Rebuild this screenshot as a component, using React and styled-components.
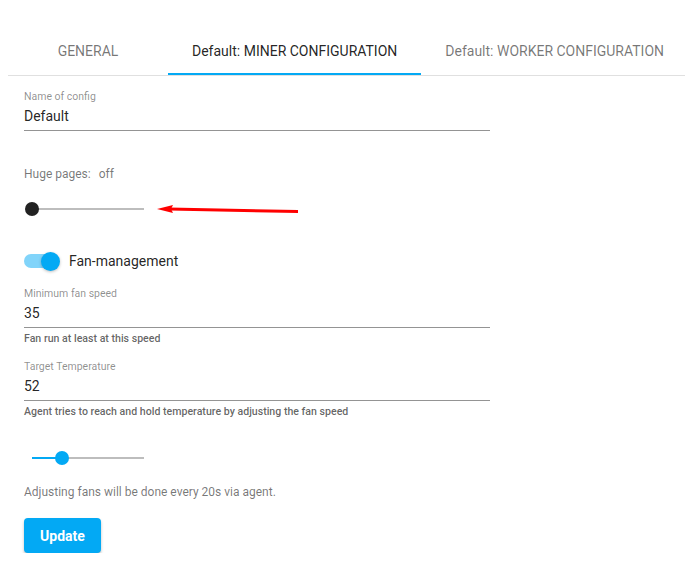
import React from 'react';
import styled, { createGlobalStyle } from 'styled-components';

const GlobalStyle = createGlobalStyle`
    body {
        margin: 0;
        background: #fff;
        font-family: Roboto, "Liberation Sans", Arial, sans-serif;
    }
`

const BLUE = '#03a9f4';

const Page = styled.div`
    padding: 27px 0 0 8px;
    overflow: hidden;
`

const TabBar = styled.div`
    display: flex;
    border-bottom: 1px solid #e0e0e0;
    overflow: hidden;
    white-space: nowrap;
`

const Tab = styled.div`
    flex-shrink: 0;
    min-width: 160px;
    height: 48px;
    padding: 0 24px;
    box-sizing: border-box;
    display: flex;
    align-items: center;
    justify-content: center;
    font-size: 14px;
    color: ${props => props.active ? 'rgba(0,0,0,0.87)' : 'rgba(0,0,0,0.54)'};
    box-shadow: ${props => props.active ? `inset 0 -2px 0 ${BLUE}` : 'none'};
`

const Content = styled.div`
    padding-left: 16px;
    width: 466px;
`

const Field = styled.div`
    margin-top: ${props => props.top}px;
`

const FieldLabel = styled.div`
    font-size: 10.5px;
    line-height: 14px;
    color: rgba(0,0,0,0.45);
`

const FieldValue = styled.div`
    margin-top: 3px;
    font-size: 14px;
    line-height: 19px;
    color: rgba(0,0,0,0.87);
    padding-bottom: 4px;
    border-bottom: 1px solid rgba(0,0,0,0.42);
`

const Helper = styled.div`
    margin-top: 4px;
    font-size: 10.6px;
    line-height: 13px;
    font-weight: 500;
    color: rgba(0,0,0,0.62);
`

const Caption = styled.div`
    margin-top: ${props => props.top}px;
    font-size: 12px;
    line-height: 16px;
    color: rgba(0,0,0,0.54);
`

const Off = styled.span`
    margin-left: 8px;
`

const SliderRow = styled.div`
    margin-top: ${props => props.top}px;
    display: flex;
    align-items: center;
    height: 14px;
`

const Slider = styled.div`
    margin-left: 8px;
    width: 112px;
    display: flex;
    align-items: center;
`

const TrackPart = styled.div`
    height: 2px;
    background: ${props => props.filled ? BLUE : '#bdbdbd'};
    flex: ${props => props.grow ? 1 : 'none'};
`

const Thumb = styled.div`
    width: 14px;
    height: 14px;
    border-radius: 50%;
    margin: 0 -7px;
    background: ${props => props.color};
    position: relative;
    z-index: 1;
    flex-shrink: 0;
`

const Arrow = styled.svg`
    margin-left: 13px;
    display: block;
`

const SwitchRow = styled.div`
    margin-top: 35px;
    display: flex;
    align-items: center;
    height: 20px;
`

const SwitchTrack = styled.div`
    width: 34px;
    height: 14px;
    border-radius: 7px;
    background: #81d4fa;
    display: flex;
    align-items: center;
    justify-content: flex-end;
`

const SwitchThumb = styled.div`
    width: 19px;
    height: 19px;
    border-radius: 50%;
    background: ${BLUE};
    margin-right: -2px;
    box-shadow: 0 1px 3px rgba(0,0,0,0.25);
`

const SwitchLabel = styled.span`
    margin-left: 11px;
    font-size: 14px;
    color: rgba(0,0,0,0.87);
`

const UpdateButton = styled.button`
    margin-top: 18px;
    width: 77px;
    height: 35px;
    border: 0;
    border-radius: 4px;
    background: ${BLUE};
    color: #fff;
    font-family: inherit;
    font-size: 14px;
    font-weight: 700;
    box-shadow: 0 2px 3px rgba(0,0,0,0.25);
    cursor: pointer;
`

const fields = [
    { label: 'Minimum fan speed', value: '35', helper: 'Fan run at least at this speed', top: 16 },
    { label: 'Target Temperature', value: '52', helper: 'Agent tries to reach and hold temperature by adjusting the fan speed', top: 15 },
];

const App = () => {
    const fanSpeed = 27;

    return (
        <Page>
            <GlobalStyle />
            <TabBar>
                <Tab>GENERAL</Tab>
                <Tab active>Default: MINER CONFIGURATION</Tab>
                <Tab>Default: WORKER CONFIGURATION</Tab>
            </TabBar>

            <Content>
                <Field top={14}>
                    <FieldLabel>Name of config</FieldLabel>
                    <FieldValue>Default</FieldValue>
                </Field>

                <Caption top={35}>Huge pages:<Off>off</Off></Caption>

                <SliderRow top={20}>
                    <Slider>
                        <Thumb color="#222" />
                        <TrackPart grow />
                    </Slider>
                    <Arrow width="142" height="12" viewBox="0 0 142 12">
                        <line x1="12" y1="6" x2="141" y2="8.5" stroke="#f00" strokeWidth="3" />
                        <polygon points="0,6 16,2 14,6 16,10" fill="#f00" />
                    </Arrow>
                </SliderRow>

                <SwitchRow>
                    <SwitchTrack>
                        <SwitchThumb />
                    </SwitchTrack>
                    <SwitchLabel>Fan-management</SwitchLabel>
                </SwitchRow>

                {fields.map(f => (
                    <Field top={f.top} key={f.label}>
                        <FieldLabel>{f.label}</FieldLabel>
                        <FieldValue>{f.value}</FieldValue>
                        <Helper>{f.helper}</Helper>
                    </Field>
                ))}

                <SliderRow top={33}>
                    <Slider>
                        <TrackPart filled style={{ width: fanSpeed + '%' }} />
                        <Thumb color={BLUE} />
                        <TrackPart grow />
                    </Slider>
                </SliderRow>

                <Caption top={19}>Adjusting fans will be done every 20s via agent.</Caption>

                <UpdateButton>Update</UpdateButton>
            </Content>
        </Page>
    )
}

export default App;
